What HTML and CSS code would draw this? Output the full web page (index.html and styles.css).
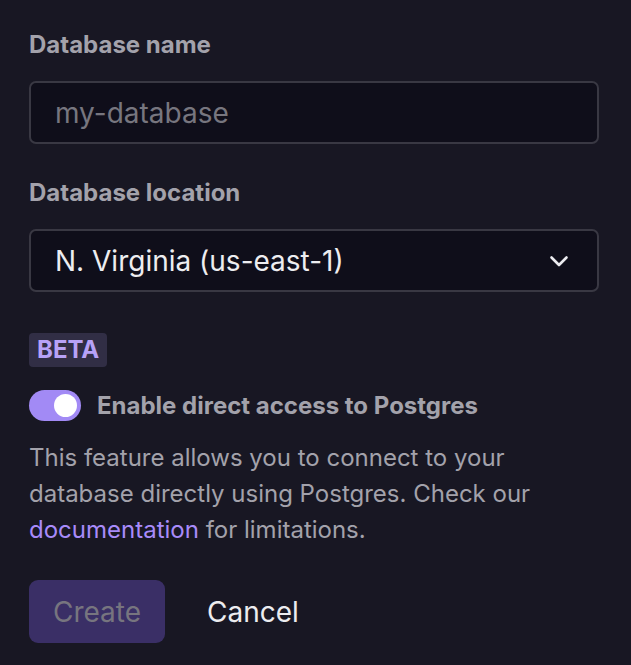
FILE: index.html
```html
<!DOCTYPE html>
<html>
<head>
<meta charset="utf-8">
<link rel="stylesheet" href="styles.css">
</head>
<body>
<div class="form">
  <div class="field">
    <label class="label">Database name</label>
    <div class="input placeholder">my-database</div>
  </div>
  <div class="field">
    <label class="label">Database location</label>
    <div class="input select">
      <span>N. Virginia (us-east-1)</span>
      <svg class="chevron" width="20" height="20" viewBox="0 0 20 20"><path d="M2.5 6.5 L10 14 L17.5 6.5" fill="none" stroke="#ececf0" stroke-width="2.6" stroke-linecap="round" stroke-linejoin="round"/></svg>
    </div>
  </div>
  <div class="beta-row"><span class="badge">BETA</span></div>
  <div class="toggle-row">
    <span class="toggle"><span class="knob"></span></span>
    <span class="toggle-label">Enable direct access to Postgres</span>
  </div>
  <p class="desc">This feature allows you to connect to your database directly using Postgres. Check our <a class="link">documentation</a> for limitations.</p>
  <div class="actions">
    <button class="btn-create">Create</button>
    <button class="btn-cancel">Cancel</button>
  </div>
</div>
</body>
</html>
```
FILE: styles.css
```css
html, body {
  margin: 0;
  padding: 0;
  background: #181723;
}
body {
  font-family: Inter, "Noto Sans", sans-serif;
  color: #a3a2ab;
}
.form {
  width: 570px;
  padding: 30px 32px 0 29px;
  display: flex;
  flex-direction: column;
}
.field {
  display: flex;
  flex-direction: column;
  gap: 21px;
  margin-bottom: 34px;
}
.label {
  display: block;
  font-size: 24px;
  line-height: 30px;
  height: 30px;
  font-weight: 650;
  color: #a3a2ab;
}
.input {
  box-sizing: border-box;
  height: 63px;
  border: 2px solid #393843;
  border-radius: 7px;
  background: #0f0e1a;
  padding: 0 24px;
  display: flex;
  align-items: center;
  font-size: 28px;
  color: #ededf0;
}
.placeholder {
  color: #77767f;
}
.select {
  justify-content: space-between;
  padding-right: 28px;
}
.chevron {
  display: block;
}
.beta-row {
  margin-top: 7px;
  display: flex;
}
.badge {
  background: #312e45;
  color: #b7a2f7;
  font-weight: 700;
  font-size: 24px;
  line-height: 34px;
  height: 34px;
  padding: 0 8px;
  border-radius: 4px;
}
.toggle-row {
  margin-top: 23px;
  display: flex;
  align-items: center;
  gap: 16px;
}
.toggle {
  width: 52px;
  height: 31px;
  border-radius: 16px;
  background: #a28af5;
  display: flex;
  align-items: center;
  justify-content: flex-end;
  padding: 0 4px;
  box-sizing: border-box;
}
.knob {
  width: 23px;
  height: 23px;
  border-radius: 50%;
  background: #ffffff;
}
.toggle-label {
  font-size: 24px;
  line-height: 31px;
  font-weight: 650;
  color: #a3a2ab;
}
.desc {
  margin: 19px 0 0;
  font-size: 24px;
  line-height: 36px;
  color: #a3a2ab;
  width: 540px;
}
.link {
  color: #a88bfa;
}
.actions {
  margin-top: 32px;
  display: flex;
  align-items: center;
  gap: 42px;
}
.btn-create {
  width: 136px;
  height: 63px;
  border: none;
  border-radius: 9px;
  background: #3a2f66;
  color: #77757f;
  font-family: Inter, sans-serif;
  font-size: 28px;
  padding: 0;
}
.btn-cancel {
  border: none;
  background: none;
  padding: 0;
  color: #ececef;
  font-family: Inter, sans-serif;
  font-size: 28px;
}
```
